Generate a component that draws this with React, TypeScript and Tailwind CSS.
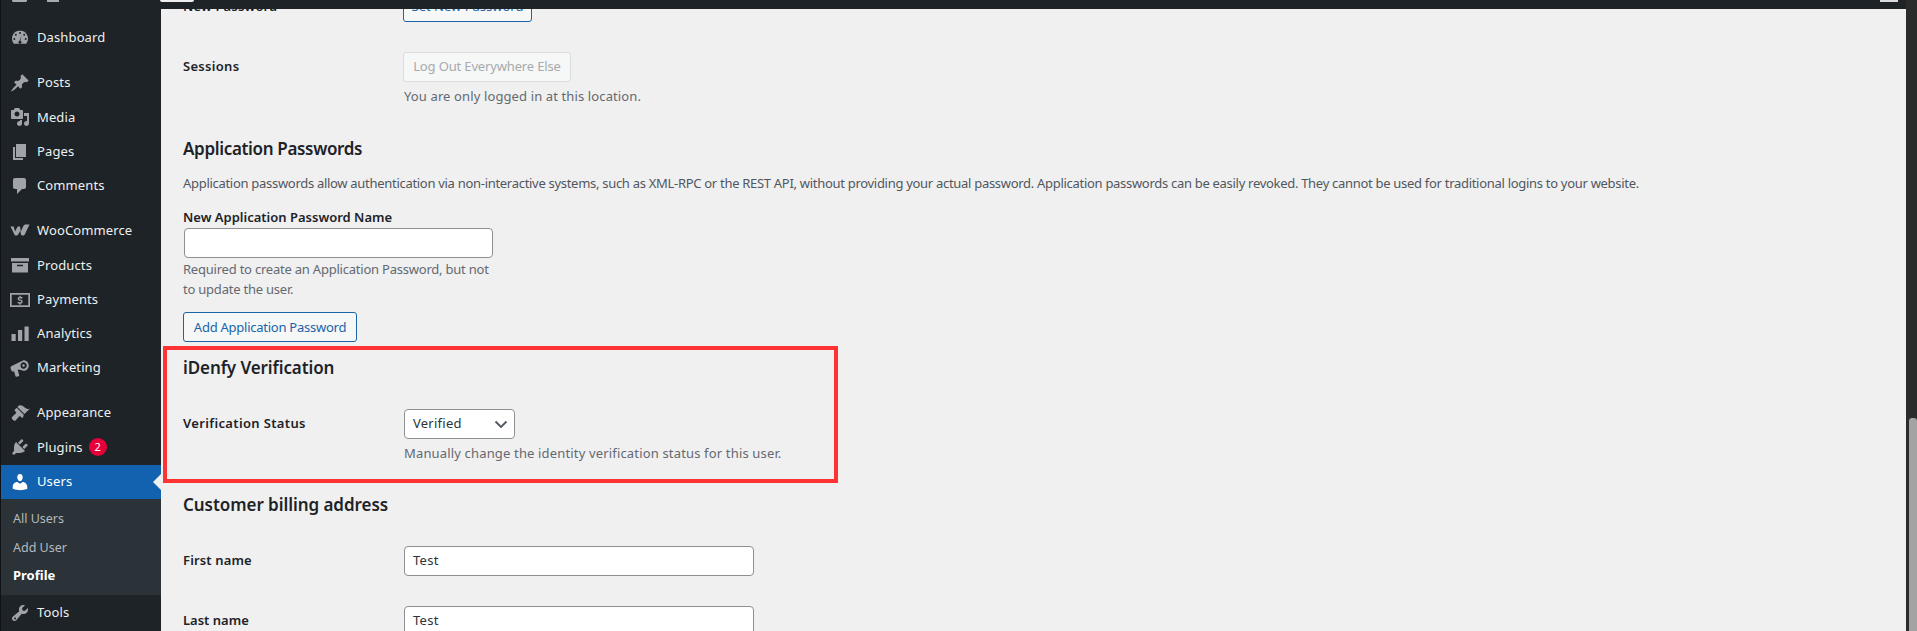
import type { ReactNode } from 'react';

const icons: Record<string, ReactNode> = {
  dashboard: (
    <>
      <path d="M10 2.500c-4.400 0-8 3.600-8 8 0 2 .7 3.800 1.800 5.200h12.400c1.100-1.400 1.800-3.200 1.800-5.200 0-4.400-3.600-8-8-8z" />
      <g fill="#1d2327">
        <circle cx="10" cy="5" r="1" />
        <circle cx="5.800" cy="6.800" r="1" />
        <circle cx="14.200" cy="6.800" r="1" />
        <circle cx="4.300" cy="11" r="1" />
        <circle cx="15.700" cy="11" r="1" />
        <path d="M11.500 7.500l-1 5.300c.9.500 1 1.300 1 1.700 0 .6-.5 1.200-1.500 1.200s-1.600-.6-1.600-1.200c0-.5.300-1.300 1.200-1.700z" />
      </g>
    </>
  ),
  posts: <path d="M10.440 3.020l1.820-1.820 6.360 6.350-1.830 1.820c-1.050-.68-2.480-.57-3.410.36l-.75.75c-.92.93-1.040 2.350-.35 3.410l-1.830 1.820-2.410-2.410-2.800 2.790c-.42.42-3.380 2.710-3.800 2.290s1.860-3.390 2.280-3.810l2.790-2.790L4.100 9.360l1.830-1.820c1.050.69 2.480.57 3.400-.36l.75-.75c.93-.92 1.050-2.350.36-3.410z" />,
  media: <path fillRule="evenodd" d="M13 11V4c0-.55-.45-1-1-1h-1.670L9 1H5L3.670 3H2c-.55 0-1 .45-1 1v7c0 .55.45 1 1 1h10c.55 0 1-.45 1-1zM7 4.500c1.380 0 2.500 1.120 2.500 2.500S8.380 9.500 7 9.500 4.500 8.380 4.500 7 5.620 4.500 7 4.500zM14 6h5v10.500c0 1.380-1.120 2.500-2.500 2.500S14 17.880 14 16.500s1.120-2.500 2.500-2.500c.17 0 .34.02.5.05V9h-3V6zm-4 8.050V13h2v3.500c0 1.380-1.120 2.500-2.500 2.500S7 17.880 7 16.500s1.120-2.500 2.500-2.500c.17 0 .34.02.5.05z" />,
  pages: <path d="M6 15V2h10v13H6zm-1 1h8v2H3V5h2v11z" />,
  comments: <path d="M5 2h9c1.100 0 2 .9 2 2v7c0 1.100-.9 2-2 2h-2l-5 5v-5H5c-1.100 0-2-.9-2-2V4c0-1.100.9-2 2-2z" />,
  woo: <path d="M.5 5.500h3.200l1.300 5 2.700-5h2.300l.8 5 2.600-5.600c.6-1.100 1.500-1.500 2.600-1.500h3.500l-4.500 9.600c-.5 1.100-1.200 1.500-2.200 1.500-1.100 0-1.700-.5-1.900-1.500l-.6-3.200-2 3.400c-.6 1-1.300 1.300-2.200 1.300-1 0-1.600-.5-1.900-1.500z" />,
  products: <path fillRule="evenodd" d="M1 3h18v3.500H1zM2 8h16v9.500H2zm5 1.800v1.500h6V9.800z" />,
  payments: (
    <>
      <path fillRule="evenodd" d="M0 3h20v14H0zm1.700 1.700v10.600h16.600V4.700z" />
      <path d="M10.700 5.800v1c.8.100 1.500.3 2 .6l-.5 1.300c-.6-.3-1.300-.5-2-.5-.8 0-1.200.2-1.200.6 0 .4.400.6 1.400.8 1.500.3 2.200 1 2.200 2.100 0 1.100-.7 1.800-1.900 2v1H9.500v-1c-.8-.1-1.600-.3-2.100-.7l.5-1.300c.6.400 1.400.6 2.100.6.800 0 1.300-.2 1.300-.7 0-.4-.4-.7-1.400-.9-1.500-.3-2.200-.9-2.200-2 0-1 .7-1.700 1.800-1.900v-1z" />
    </>
  ),
  analytics: <path d="M1.500 10h4.200v7H1.500zM8 6h4.200v11H8zM14.500 2.500h4.200V17h-4.200z" />,
  marketing: (
    <path fillRule="evenodd" d="M13.500 2.200c2.700 0 5.300 2.200 5.300 5.300 0 2.900-2.400 5.300-5.300 5.300l-4.700-1.200-1 .3 1.400 5.300c.1.500-.2 1-.7 1.100l-2 .5c-.5.100-1-.2-1.100-.7L4.100 13.300l-1.500.4C1.700 13 .8 11.200.6 9.900c-.1-.9.100-1.400.6-1.700zm0 2c-1.800 0-3 1.500-3 3.300s1.200 3.300 3 3.300 3.300-1.500 3.300-3.300-1.500-3.300-3.300-3.300zm0 2a1.300 1.300 0 110 2.600 1.300 1.300 0 010-2.600z" />
  ),
  appearance: <path d="M14.480 11.060L7.410 3.990l1.500-1.500c.5-.56 2.300-.47 3.510.32 1.210.8 1.430 1.280 2.910 2.100 1.180.64 2.450 1.260 4.450.85zm-.71.71L6.700 4.700 4.930 6.470c-.39.39-.39 1.020 0 1.410l1.060 1.060c.39.39.39 1.030 0 1.420-.6.6-1.430 1.270-2.210 1.970-.49.44-.99.880-1.430 1.320-.31.310-.65.880-.64 1.380.02.5.62 1.210 1.090 1.680s1.150 1.060 1.650 1.080c.49.020 1.070-.33 1.380-.64.44-.44.88-.94 1.320-1.430.7-.78 1.370-1.610 1.970-2.210.39-.39 1.030-.39 1.420 0l1.060 1.060c.39.39 1.020.39 1.410 0z" />,
  plugins: <path d="M13.110 4.360L9.870 7.600 8 5.730l3.240-3.240c.35-.34 1.050-.2 1.560.31.52.51.66 1.210.31 1.560zm-8 1.770l.91-1.120 9.010 9.010-1.190.84c-.71.71-2.630 1.160-3.820 1.160H6.140L4.900 17.260c-.59.59-1.540.59-2.120 0-.59-.58-.59-1.530 0-2.120l1.240-1.240v-3.880c0-1.130.52-3.130 1.090-3.890zm7.260 3.970l3.240-3.240c.34-.35 1.040-.21 1.550.31.52.51.66 1.210.31 1.550l-3.240 3.250z" />,
  users: <path d="M10 9.250c-2.270 0-2.730-3.440-2.730-3.440C7 4.020 7.820 2 9.970 2c2.160 0 2.980 2.020 2.710 3.810 0 0-.41 3.440-2.680 3.440zm0 2.570L12.720 10c2.390 0 4.520 2.330 4.520 4.530v2.490s-3.650 1.130-7.240 1.130c-3.650 0-7.240-1.130-7.240-1.130v-2.490c0-2.250 1.940-4.480 4.470-4.480z" />,
  tools: <path fillRule="evenodd" d="M16.680 9.770c-1.340 1.340-3.300 1.670-4.950.99l-5.410 6.520c-.99.99-2.590.99-3.580 0s-.99-2.590 0-3.570l6.520-5.420c-.68-1.650-.35-3.610.99-4.950 1.280-1.280 3.120-1.640 4.730-1.100l-2.810 2.810.02 1.770 1.010 1.010h1.770l2.810-2.810c.54 1.610.18 3.450-1.100 4.730zM4.410 16.130c.39.39 1.030.39 1.420 0s.39-1.030 0-1.420-1.030-.39-1.420 0-.39 1.030 0 1.420z" />,
};

function MenuItem({ icon, label, active, badge }: { icon: string; label: string; active?: boolean; badge?: string }) {
  return (
    <div className={`relative flex h-[34.3px] items-center ${active ? 'bg-[#1262b0] text-white' : 'text-[#eef0f1]'}`}>
      <svg viewBox="0 0 20 20" className={`ml-[9px] h-[20px] w-[20px] shrink-0 ${active ? 'fill-white' : 'fill-[#a0a4a8]'}`}>
        {icons[icon]}
      </svg>
      <span className="ml-[7px] tracking-[0.12px]">{label}</span>
      {badge && (
        <span className="ml-[6px] flex h-[18px] w-[18px] items-center justify-center rounded-full bg-[#e6003a] text-[11px] text-white">
          {badge}
        </span>
      )}
      {active && (
        <div className="absolute right-0 top-[9px] h-0 w-0 border-y-[8px] border-r-[8px] border-y-transparent border-r-[#f0f0f1]" />
      )}
    </div>
  );
}

function Sidebar() {
  return (
    <aside className="h-full w-[160px] shrink-0 bg-[#1d2327] pt-[12px]">
      <MenuItem icon="dashboard" label="Dashboard" />
      <div className="h-[10.7px]" />
      <MenuItem icon="posts" label="Posts" />
      <MenuItem icon="media" label="Media" />
      <MenuItem icon="pages" label="Pages" />
      <MenuItem icon="comments" label="Comments" />
      <div className="h-[10.7px]" />
      <MenuItem icon="woo" label="WooCommerce" />
      <MenuItem icon="products" label="Products" />
      <MenuItem icon="payments" label="Payments" />
      <MenuItem icon="analytics" label="Analytics" />
      <MenuItem icon="marketing" label="Marketing" />
      <div className="h-[10.7px]" />
      <MenuItem icon="appearance" label="Appearance" />
      <MenuItem icon="plugins" label="Plugins" badge="2" />
      <MenuItem icon="users" label="Users" active />
      <div className="flex h-[96.5px] flex-col bg-[#2c3338] pl-[12px] pt-[6px] text-[12.5px] text-[#b4b9be]">
        <div className="flex h-[29px] items-center">All Users</div>
        <div className="flex h-[29px] items-center">Add User</div>
        <div className="flex h-[26px] items-center text-[13px] font-bold text-white">Profile</div>
      </div>
      <MenuItem icon="tools" label="Tools" />
    </aside>
  );
}

function Field({ className, children }: { className: string; children?: ReactNode }) {
  return (
    <div className={`flex h-[30px] items-center rounded-[4px] border border-[#8c8f94] bg-white px-[8px] tracking-[0.25px] text-[#2c3338] ${className}`}>
      {children}
    </div>
  );
}

function Btn({ children, disabled, className = '' }: { children: ReactNode; disabled?: boolean; className?: string }) {
  return (
    <div
      className={`flex h-[30px] items-center justify-center rounded-[3px] border bg-[#f6f7f7] ${
        disabled ? 'border-[#dcdcde] text-[#a7aaad]' : 'border-[#1a65a8] text-[#1a65a8]'
      } ${className}`}
    >
      {children}
    </div>
  );
}

function Row({ label, labelClass = 'tracking-[0.15px]', children }: { label: string; labelClass?: string; children: ReactNode }) {
  return (
    <div className="flex">
      <div className={`flex h-[30px] w-[220px] shrink-0 items-center font-semibold text-[#1d2327] ${labelClass}`}>{label}</div>
      <div className="min-w-0 flex-1">{children}</div>
    </div>
  );
}

function Heading({ className = '', children }: { className?: string; children: ReactNode }) {
  return <h2 className={`text-[17px] font-semibold leading-[24px] text-[#1d2327] ${className}`}>{children}</h2>;
}

function Main() {
  return (
    <main className="min-w-0 flex-1 overflow-hidden bg-[#f0f0f1] pl-[22px]">
      <div className="-mt-[17px]">
        <Row label="New Password">
          <Btn className="w-[129px]">Set New Password</Btn>
        </Row>
      </div>

      <div className="mt-[30px]">
        <Row label="Sessions" labelClass="tracking-[0.3px]">
          <Btn disabled className="w-[168px] tracking-[-0.15px]">Log Out Everywhere Else</Btn>
          <p className="ml-px mt-[4px] leading-[20px] tracking-[0.12px] text-[#646970]">You are only logged in at this location.</p>
        </Row>
      </div>

      <div className="mt-[31px]">
        <Heading className="tracking-[-0.33px]">Application Passwords</Heading>
      </div>
      <p className="mt-[11.5px] leading-[20px] tracking-[-0.295px] text-[#50575e]">
        Application passwords allow authentication via non-interactive systems, such as XML-RPC or the REST API, without providing your actual password. Application passwords can be easily revoked. They cannot be used for traditional logins to your website.
      </p>
      <div className="mt-[14.5px] font-semibold leading-[20px] text-[#1d2327]">New Application Password Name</div>
      <Field className="ml-px mt-px w-[309px]" />
      <p className="mt-px leading-[20px] tracking-[-0.22px] text-[#646970]">
        Required to create an Application Password, but not
        <br />
        to update the user.
      </p>
      <Btn className="mt-[13px] w-[174px] pt-[2px] tracking-[-0.25px]">Add Application Password</Btn>

      <section className="-ml-[20px] mt-[4px] h-[137px] w-[675px] border-[4px] border-[#ff3333] pl-[16px] pt-[6px]">
        <Heading className="tracking-[-0.1px]">iDenfy Verification</Heading>
        <div className="mt-[29px]">
          <Row label="Verification Status" labelClass="tracking-[0.35px]">
            <Field className="ml-px w-[111px] justify-between">
              <span>Verified</span>
              <svg viewBox="0 0 20 20" className="-mr-[5px] h-[20px] w-[20px] fill-none stroke-[#50575e] stroke-[1.8]">
                <path d="M4.500 7.500l5.500 5.500 5.500-5.500" />
              </svg>
            </Field>
            <p className="ml-px mt-[4px] leading-[20px] tracking-[0.16px] text-[#646970]">Manually change the identity verification status for this user.</p>
          </Row>
        </div>
      </section>

      <div className="mt-[10px]">
        <Heading className="tracking-[-0.05px]">Customer billing address</Heading>
      </div>
      <div className="mt-[29px]">
        <Row label="First name">
          <Field className="ml-px w-[350px]">Test</Field>
        </Row>
      </div>
      <div className="mt-[30px]">
        <Row label="Last name" labelClass="">
          <Field className="ml-px w-[350px]">Test</Field>
        </Row>
      </div>
    </main>
  );
}

export default function App() {
  return (
    <div className="flex h-[631px] w-[1917px] overflow-hidden font-['Noto_Sans',sans-serif] text-[13px] text-[#3c434a]">
      <div className="flex min-w-0 flex-1 flex-col border-l border-[#0f1214]">
        {/* admin bar, scrolled almost out of view */}
        <div className="z-10 flex h-[9px] shrink-0 items-start bg-[#1d2327]">
          <div className="ml-[11px] h-[2px] w-[15px] rounded-b-full border-x-2 border-b-2 border-[#a7aaad]" />
          <div className="ml-[20px] h-[2px] w-[12px] bg-[#a7aaad]" />
          <div className="ml-[101px] h-[2px] w-[34px] rounded-b-[2px] bg-[#f0f0f1]" />
          <div className="ml-auto mr-[8px] h-[2px] w-[18px] bg-[#dcdcde]" />
        </div>
        <div className="flex min-h-0 flex-1">
          <Sidebar />
          <Main />
        </div>
      </div>
      <div className="flex w-[11px] shrink-0 flex-col justify-end bg-[#2b2b2b] pl-[3px]">
        <div className="h-[213px] rounded-t-[3px] bg-[#a3a3a3]" />
      </div>
    </div>
  );
}
